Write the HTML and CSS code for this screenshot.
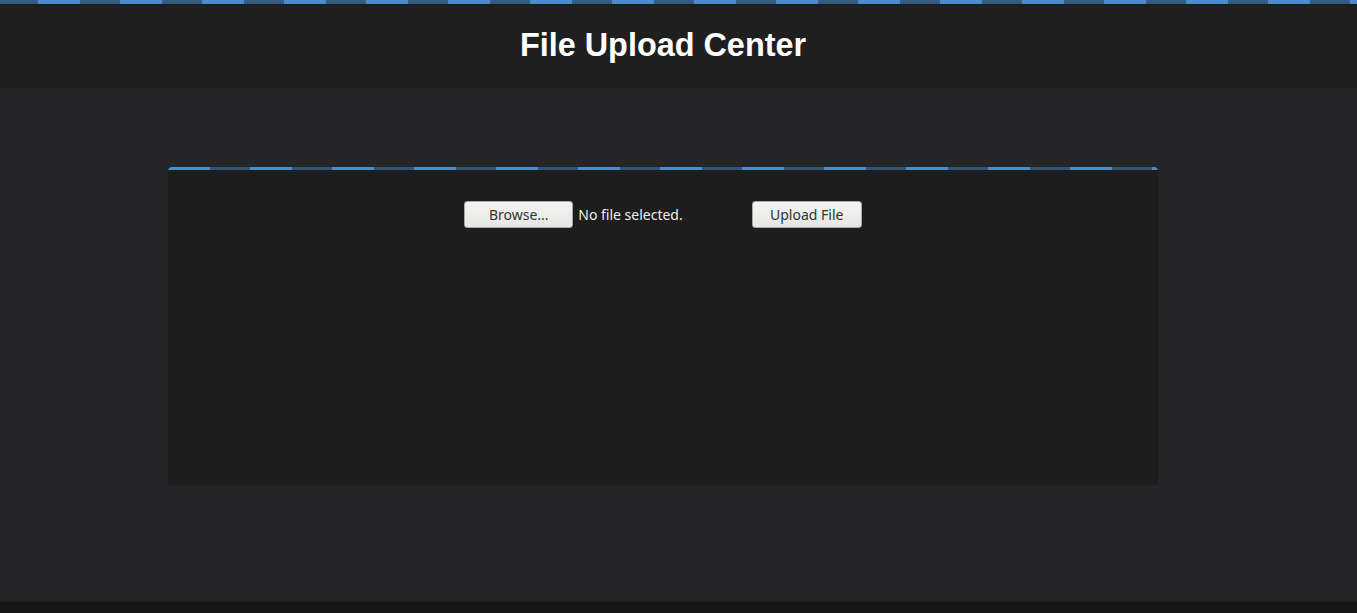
FILE: index.html
```html
<!DOCTYPE html>
<html lang="en">
<head>
<meta charset="utf-8">
<title>File Upload Center</title>
<link rel="stylesheet" href="styles.css">
</head>
<body>
<header class="site-header">
  <div class="stripe"></div>
  <div class="header-inner">
    <h1 class="title">File Upload Center</h1>
  </div>
</header>
<main class="main">
  <section class="panel">
    <div class="panel-stripe"></div>
    <form class="upload-form">
      <div class="file-field">
        <button type="button" class="btn">Browse...</button>
        <span class="file-label">No file selected.</span>
      </div>
      <button type="button" class="btn btn-upload">Upload File</button>
    </form>
  </section>
</main>
<footer class="site-footer"></footer>
</body>
</html>
```
FILE: styles.css
```css
html, body {
  margin: 0;
  padding: 0;
  height: 100%;
}
body {
  background: #252527;
  font-family: "Liberation Sans", Arial, sans-serif;
  display: flex;
  flex-direction: column;
  overflow: hidden;
}
.site-header {
  background: #1f1f20;
  height: 88px;
  flex: none;
}
.stripe {
  height: 4px;
  background: repeating-linear-gradient(90deg, #345b80 0 38px, #4a8dcf 38px 80px, #345b80 80px 82px);
  background-size: 82px 4px;
  box-shadow: 0 1px 0 #1a1a1b;
}
.header-inner {
  margin-right: 31px;
  text-align: center;
}
.title {
  margin: 0;
  padding-top: 24px;
  font-size: 32.4px;
  line-height: 34px;
  font-weight: bold;
  color: #ffffff;
}
.main {
  flex: 1;
  padding: 79px 31px 0 0;
  background: #252527;
}
.panel {
  width: 990px;
  height: 318px;
  margin-left: 168px;
  background: #1d1d1e;
  border-radius: 4px;
  box-shadow: 0 0 1px rgba(0,0,0,0.5);
  overflow: hidden;
}
.panel-stripe {
  height: 3px;
  background: repeating-linear-gradient(90deg, #4a8dcf 0 42px, #2f5475 42px 82px);
  border-radius: 4px 4px 0 0;
}
.upload-form {
  display: flex;
  justify-content: center;
  align-items: center;
  gap: 69px;
  padding-top: 31px;
  font-family: "Noto Sans", "DejaVu Sans", sans-serif;
  font-size: 14px;
}
.file-field {
  display: flex;
  align-items: center;
  gap: 5px;
}
.btn {
  font-family: "Noto Sans", "DejaVu Sans", sans-serif;
  font-size: 14px;
  color: #2e3436;
  background: linear-gradient(#f4f4f3, #e6e6e5);
  border: 1px solid #a8a8a6;
  border-radius: 3px;
  height: 27px;
  width: 109px;
  padding: 0;
  box-sizing: border-box;
}
.btn-upload {
  width: 110px;
}
.file-label {
  color: #eeeeec;
}
.site-footer {
  height: 11px;
  flex: none;
  background: #161617;
  box-shadow: 0 -1px 2px rgba(0,0,0,0.2);
}
```
